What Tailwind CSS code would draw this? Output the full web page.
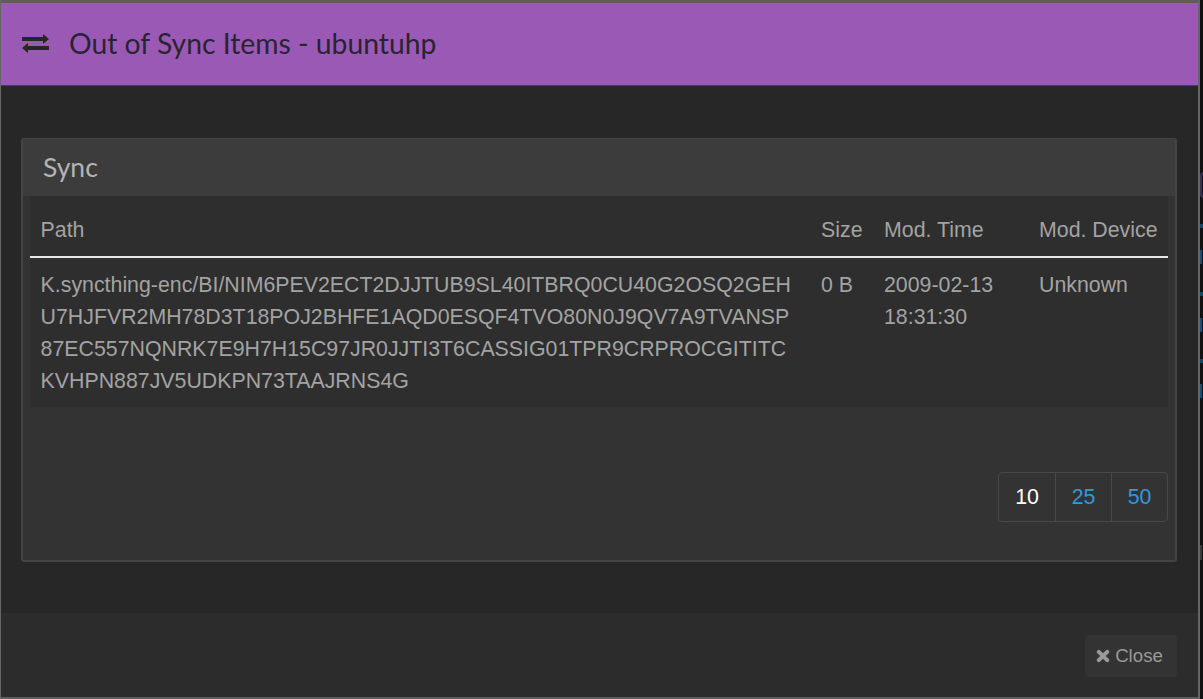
<!DOCTYPE html>
<html>
<head>
<meta charset="utf-8">
<script src="https://cdn.jsdelivr.net/npm/@tailwindcss/browser@4"></script>
</head>
<body class="relative bg-[#111111] overflow-hidden h-[699px] font-['Liberation_Sans',sans-serif]">
<div class="absolute left-[1200px] top-[172px] w-[8px] h-[26px] rounded-full border-2 border-[#3a3052]"></div>
<div class="absolute left-[1200px] top-[224px] w-[3px] h-[4px] bg-[#174766]"></div>
<div class="absolute left-[1200px] top-[292px] w-[3px] h-[4px] bg-[#174766]"></div>
<div class="absolute left-[1200px] top-[359px] w-[3px] h-[4px] bg-[#174766]"></div>
<div class="absolute left-[1200px] top-[250px] w-[2px] h-[14px] bg-[#174f78]"></div>
<div class="absolute left-[1200px] top-[318px] w-[2px] h-[14px] bg-[#174f78]"></div>
<div class="absolute left-[1200px] top-[384px] w-[2px] h-[14px] bg-[#174f78]"></div>
<div class="absolute left-[1200px] top-[545px] w-[2px] h-[15px] bg-[#3a3a3a]"></div>
<div class="h-[699px] w-[1200px] pt-[3px] pb-[2px] bg-[#5e5e5e] border-r-2 border-l border-[#666666] flex flex-col">
  <header class="h-[83px] shrink-0 bg-[#9b59b6] border-b border-[#444] flex items-center pl-[21px] text-[#282430]">
    <svg class="w-[27px] h-[19px] mr-[20px] -mt-[1px]" viewBox="0 0 27 19" fill="#262626"><path d="M0 3h21V0l6 5-6 5V7H0zM27 12v4H6v3l-6-5 6-5v3z"/></svg>
    <h1 class="font-['Lato',sans-serif] text-[28.3px] leading-none -mt-[2px]">Out of Sync Items - ubuntuhp</h1>
  </header>
  <main class="h-[527px] shrink-0 bg-[#272727] pl-[20px] pr-[21px] pt-[52px]">
    <section class="h-[424px] bg-[#333333] border-2 border-[#444444] rounded-[3px] border-t border-l-2">
      <h2 class="h-[57px] bg-[#3c3c3c] pl-[20px] flex items-center font-['Lato',sans-serif] text-[26.5px] text-[#b4b4b4] font-normal">Sync</h2>
      <div class="px-[7px]">
        <table class="w-[1138px] table-fixed bg-[#2e2e2e] text-[21.33px] leading-[32px] text-[#a3a3a3]">
          <colgroup><col class="w-[780px]"><col class="w-[63px]"><col class="w-[155px]"><col class="w-[140px]"></colgroup>
          <thead>
            <tr class="h-[61px] border-b-2 border-[#e8e8e8]">
              <th class="font-normal text-left pl-[10.6px] pt-[7px]">Path</th>
              <th class="font-normal text-left pl-[11px] pt-[7px]">Size</th>
              <th class="font-normal text-left pl-[11px] pt-[7px]">Mod. Time</th>
              <th class="font-normal text-left pl-[11px] pt-[7px]">Mod. Device</th>
            </tr>
          </thead>
          <tbody>
            <tr class="h-[150px] align-top">
              <td class="pl-[10.6px] pt-[11px] whitespace-nowrap">K.syncthing-enc/BI/NIM6PEV2ECT2DJJTUB9SL40ITBRQ0CU40G2OSQ2GEH<br>U7HJFVR2MH78D3T18POJ2BHFE1AQD0ESQF4TVO80N0J9QV7A9TVANSP<br>87EC557NQNRK7E9H7H15C97JR0JJTI3T6CASSIG01TPR9CRPROCGITITC<br>KVHPN887JV5UDKPN73TAAJRNS4G</td>
              <td class="pl-[11px] pt-[11px]">0 B</td>
              <td class="pl-[11px] pt-[11px]">2009-02-13<br>18:31:30</td>
              <td class="pl-[11px] pt-[11px]">Unknown</td>
            </tr>
          </tbody>
        </table>
        <nav class="mt-[65px] flex justify-end">
          <div class="flex h-[50px] border border-[#484848] rounded-[4px] text-[21.33px] divide-x divide-[#484848]">
            <span class="w-[57px] pt-[2px] flex items-center justify-center text-white">10</span>
            <a class="w-[56px] pt-[2px] flex items-center justify-center text-[#3498db]">25</a>
            <a class="w-[55px] pt-[2px] flex items-center justify-center text-[#3498db]">50</a>
          </div>
        </nav>
      </div>
    </section>
  </main>
  <footer class="flex-1 bg-[#2c2c2c] flex justify-end items-start pt-[22px] pr-[21px]">
    <button class="w-[92px] h-[42px] pr-[3px] rounded-[4px] bg-[#333333] text-[#999999] text-[18.67px] flex items-center justify-center gap-[5px]">
      <svg class="w-[14px] h-[14px]" viewBox="0 0 14 14" fill="none" stroke="#999999" stroke-width="4" stroke-linecap="round"><path d="M2.8 2.8l8.4 8.4M11.2 2.8l-8.4 8.4"/></svg>
      Close
    </button>
  </footer>
</div>
</body>
</html>
